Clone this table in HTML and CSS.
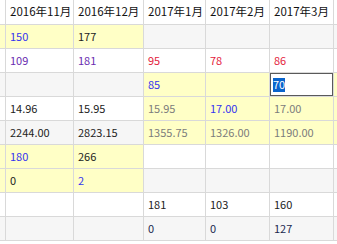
FILE: index.html
```html
<!DOCTYPE html>
<html lang="zh">
<head>
<meta charset="utf-8">
<link rel="stylesheet" href="styles.css">
</head>
<body>
<div class="grid">
  <div class="c hd"></div><div class="c hd">2016年11月</div><div class="c hd">2016年12月</div><div class="c hd">2017年1月</div><div class="c hd">2017年2月</div><div class="c hd">2017年3月</div><div class="c hd"></div>

  <div class="c y"></div><div class="c y blue">150</div><div class="c y">177</div><div class="c g"></div><div class="c g"></div><div class="c g"></div><div class="c g"></div>

  <div class="c w"></div><div class="c w purple">109</div><div class="c w purple">181</div><div class="c w red">95</div><div class="c w red">78</div><div class="c w red">86</div><div class="c w"></div>

  <div class="c g"></div><div class="c g"></div><div class="c g"></div><div class="c y blue">85</div><div class="c y"></div><div class="c edit"><span class="sel">70</span></div><div class="c y"></div>

  <div class="c w"></div><div class="c w">14.96</div><div class="c w">15.95</div><div class="c y gray">15.95</div><div class="c y blue">17.00</div><div class="c y gray">17.00</div><div class="c y"></div>

  <div class="c g"></div><div class="c g">2244.00</div><div class="c g">2823.15</div><div class="c y gray">1355.75</div><div class="c y gray">1326.00</div><div class="c y gray">1190.00</div><div class="c y"></div>

  <div class="c y"></div><div class="c y blue">180</div><div class="c y">266</div><div class="c w"></div><div class="c w"></div><div class="c w"></div><div class="c w"></div>

  <div class="c y"></div><div class="c y">0</div><div class="c y blue">2</div><div class="c g"></div><div class="c g"></div><div class="c g"></div><div class="c g"></div>

  <div class="c w"></div><div class="c w"></div><div class="c w"></div><div class="c w">181</div><div class="c w">103</div><div class="c w">160</div><div class="c w"></div>

  <div class="c g"></div><div class="c g"></div><div class="c g"></div><div class="c g navy">0</div><div class="c g navy">0</div><div class="c g navy">127</div><div class="c g"></div>
</div>
</body>
</html>
```
FILE: styles.css
```css
html, body {
  margin: 0;
  padding: 0;
  background: #ffffff;
  overflow: hidden;
}
body {
  width: 337px;
  height: 244px;
  font-family: "Noto Sans CJK SC", "Noto Sans", sans-serif;
  font-size: 11px;
  color: #222222;
}
.grid {
  display: grid;
  grid-template-columns: 5px 67px 69px 61px 63px 63px minmax(0, 1fr);
  grid-template-rows: 24px repeat(9, 23px);
  gap: 1px;
  background: #d9d9d9;
  width: 337px;
  padding-bottom: 1px;
}
.c {
  display: flex;
  align-items: center;
  padding-left: 4px;
  white-space: nowrap;
  overflow: hidden;
  line-height: 1;
  min-width: 0;
}
.hd {
  background: #ffffff;
  color: #111111;
  font-size: 11.5px;
}
.w { background: #ffffff; }
.g { background: #f6f6f6; }
.y { background: #ffffc6; }
.blue { color: #3434f0; }
.purple { color: #6a2cb0; }
.red { color: #e4223c; }
.gray { color: #7c7c7c; }
.navy { color: #1c2850; }
.edit {
  background: #ffffff;
  box-shadow: inset 0 0 0 1px #5a5a5a;
  padding-left: 3px;
}
.sel {
  background: #0a64cc;
  color: #ffffff;
  padding: 1px 0 2px 0;
  line-height: 11px;
}
```
